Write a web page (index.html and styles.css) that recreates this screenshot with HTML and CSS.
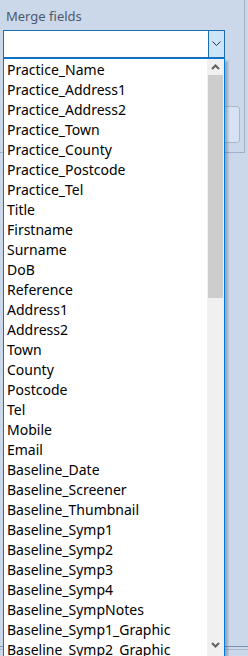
FILE: index.html
```html
<!DOCTYPE html>
<html>
<head>
    <meta charset="utf-8">
    <title>Merge fields</title>
    <link rel="stylesheet" href="styles.css">
</head>
<body>

<div class="frame">
    <div class="label">Merge fields</div>
    <div class="combo">
        <div class="combo-text"></div>
        <div class="combo-btn">
            <svg width="9" height="6" viewBox="0 0 9 6"><polyline points="0.5,0.5 4.5,4.5 8.5,0.5" fill="none" stroke="#333" stroke-width="1"/></svg>
        </div>
    </div>
    <div class="side-btn"></div>
</div>
<div class="bottom-bar"></div>

<!-- dropdown open over the form -->
<div class="dropdown">
    <ul class="items">
        <li>Practice_Name</li>
        <li>Practice_Address1</li>
        <li>Practice_Address2</li>
        <li>Practice_Town</li>
        <li>Practice_County</li>
        <li>Practice_Postcode</li>
        <li>Practice_Tel</li>
        <li>Title</li>
        <li>Firstname</li>
        <li>Surname</li>
        <li>DoB</li>
        <li>Reference</li>
        <li>Address1</li>
        <li>Address2</li>
        <li>Town</li>
        <li>County</li>
        <li>Postcode</li>
        <li>Tel</li>
        <li>Mobile</li>
        <li>Email</li>
        <li>Baseline_Date</li>
        <li>Baseline_Screener</li>
        <li>Baseline_Thumbnail</li>
        <li>Baseline_Symp1</li>
        <li>Baseline_Symp2</li>
        <li>Baseline_Symp3</li>
        <li>Baseline_Symp4</li>
        <li>Baseline_SympNotes</li>
        <li>Baseline_Symp1_Graphic</li>
        <li>Baseline_Symp2_Graphic</li>
    </ul>
    <div class="scrollbar">
        <div class="arrow">
            <svg width="9" height="6" viewBox="0 0 9 6"><polyline points="1,5 4.5,1.5 8,5" fill="none" stroke="#606060" stroke-width="2"/></svg>
        </div>
        <div class="thumb"></div>
        <div class="track"></div>
        <div class="arrow">
            <svg width="9" height="6" viewBox="0 0 9 6"><polyline points="1,1 4.5,4.5 8,1" fill="none" stroke="#606060" stroke-width="2"/></svg>
        </div>
    </div>
</div>

</body>
</html>
```

FILE: styles.css
```css
*{
    margin: 0;
    padding: 0;
    box-sizing: border-box;
}
html, body{
    width: 248px;
    height: 656px;
    overflow: hidden;
}
body{
    position: relative;
    background: #cbd8ea;
    font-family: "Noto Sans", "Open Sans", sans-serif;
    color: #000;
}
ul, li{
    list-style: none;
}
.frame{
    width: 245px;
    height: 153px;
    border-right: 1px solid #9fb0c8;
    border-bottom: 1px solid #9fb0c8;
    padding: 5px 0 0 3px;
}
.label{
    padding-left: 3px;
    height: 25px;
    font-size: 13px;
    line-height: 22px;
    color: #4b5870;
}
.combo{
    display: flex;
    width: 222px;
    height: 28px;
    border: 1px solid #1c6db4;
    background: #fff;
}
.combo-text{
    flex: 1;
}
.combo-btn{
    width: 16px;
    display: flex;
    align-items: center;
    justify-content: center;
    background: #cce4f7;
    border-left: 1px solid #1c6db4;
}
.side-btn{
    width: 30px;
    height: 37px;
    margin: 48px 0 0 207px;
    border: 1px solid #aab8cc;
    border-radius: 3px;
    background: #d6e2f1;
}
.bottom-bar{
    margin-top: 493px;
    height: 4px;
    border-top: 1px solid #7f93b0;
    border-bottom: 1px solid #a9b8cd;
}
.dropdown{
    position: absolute;
    left: 3px;
    top: 58px;
    width: 222px;
    height: 610px;
    display: flex;
    border: 1px solid #0078d7;
    background: #fff;
    box-shadow: 3px 3px 2px rgba(60, 80, 110, 0.35);
}
.items{
    flex: 1;
    padding-top: 1px;
}
.items li{
    height: 20px;
    line-height: 20px;
    padding-left: 3px;
    font-size: 14px;
    white-space: nowrap;
}
.scrollbar{
    width: 17px;
    display: flex;
    flex-direction: column;
    background: #f0f0f0;
    padding: 0 1px;
}
.arrow{
    height: 16px;
    display: flex;
    align-items: center;
    justify-content: center;
}
.thumb{
    height: 223px;
    background: #cdcdcd;
}
.track{
    flex: 1;
}
.scrollbar .arrow:last-child{
    margin-bottom: 14px;
}
```
